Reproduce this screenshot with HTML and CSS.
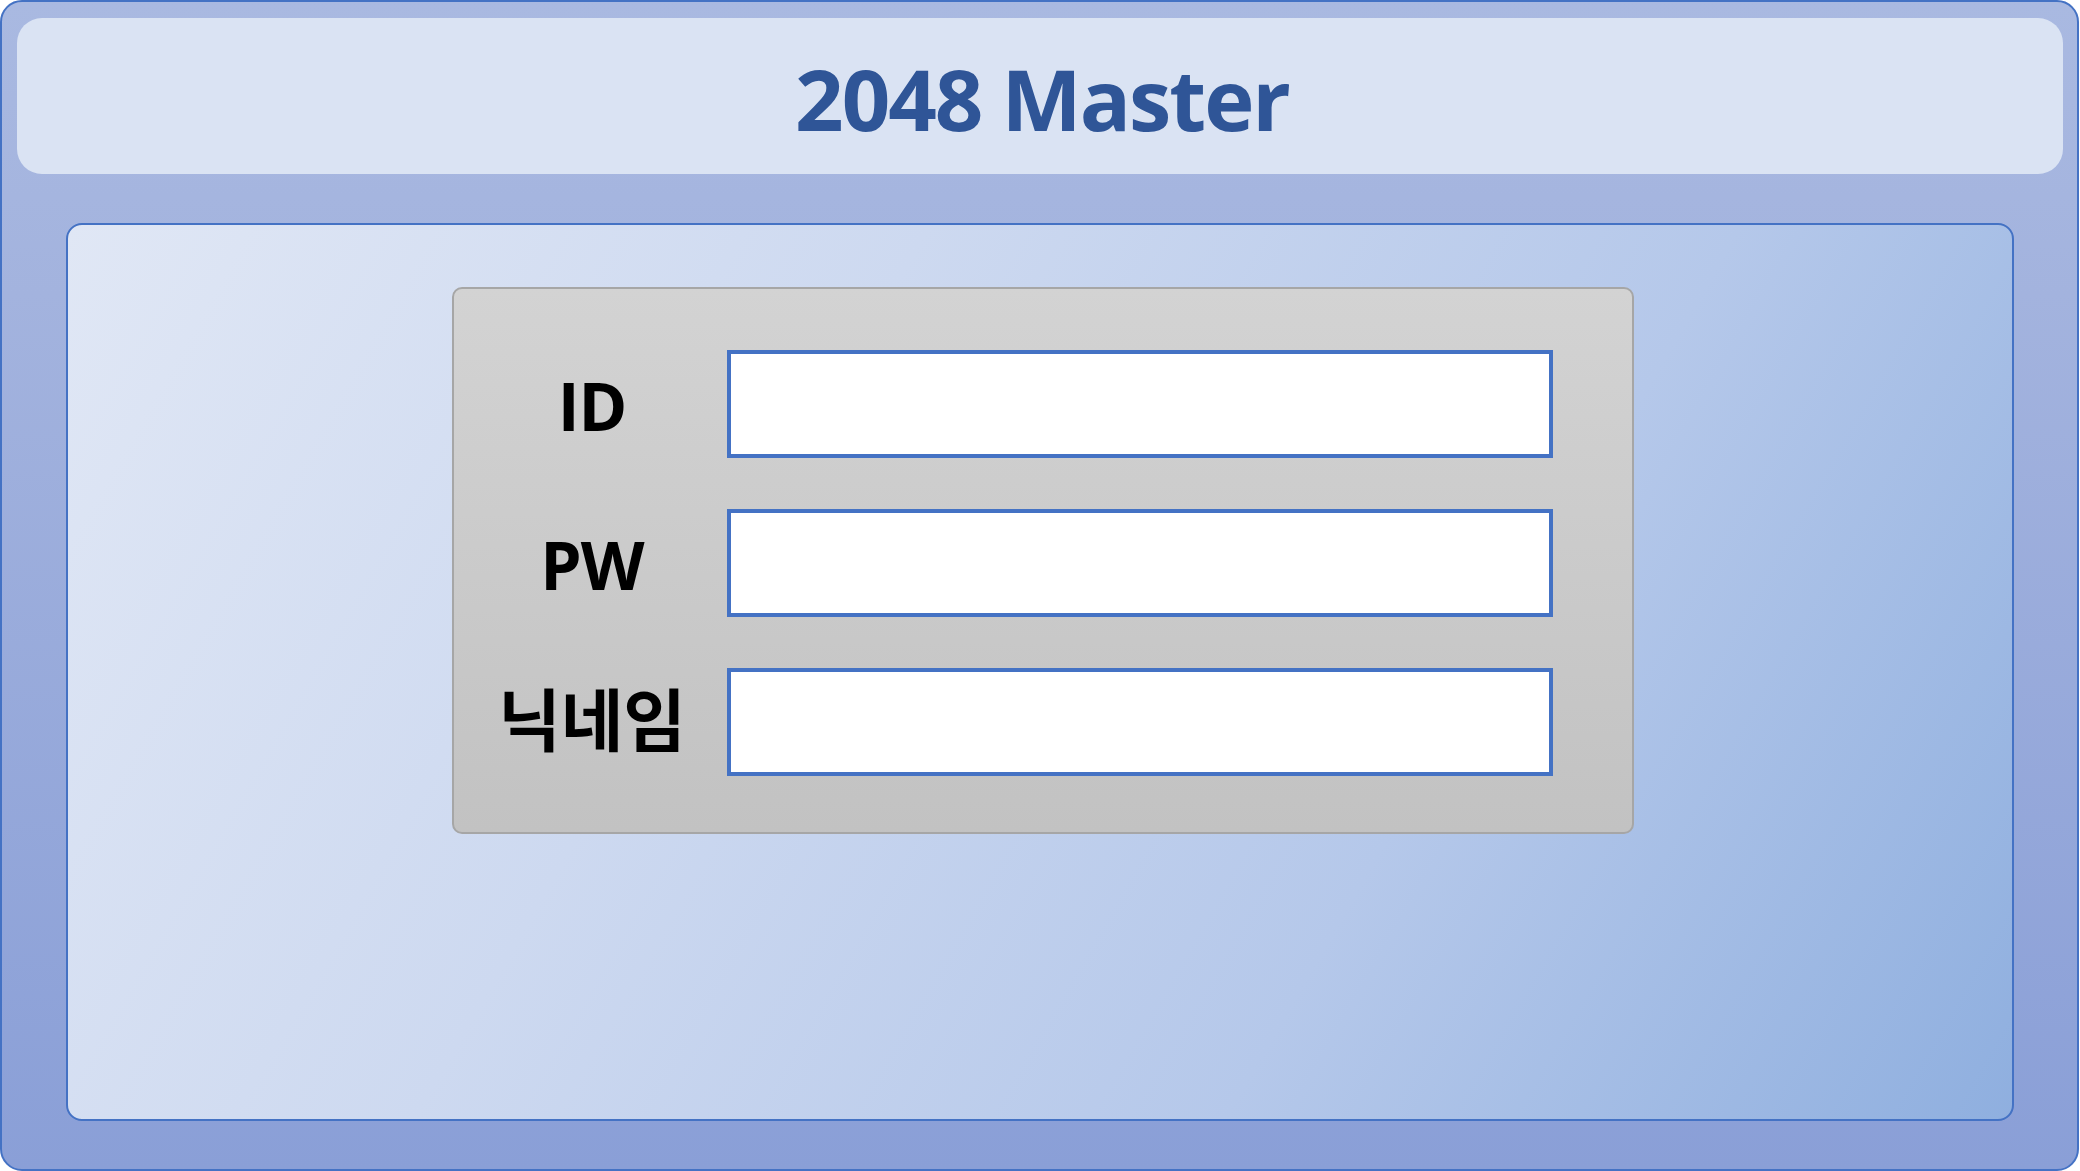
FILE: index.html
```html
<!DOCTYPE html>
<html lang="ko">
<head>
<meta charset="utf-8">
<title>2048 Master</title>
<link rel="stylesheet" href="styles.css">
</head>
<body>
<div class="frame">
  <header class="header">
    <h1 class="title">2048 Master</h1>
  </header>
  <main class="stage">
    <form class="login">
      <div class="row">
        <label class="label" for="uid">ID</label>
        <input class="field" id="uid" type="text">
      </div>
      <div class="row">
        <label class="label" for="upw">PW</label>
        <input class="field" id="upw" type="password">
      </div>
      <div class="row">
        <label class="label label-ko" for="unick">닉네임</label>
        <input class="field" id="unick" type="text">
      </div>
    </form>
  </main>
</div>
</body>
</html>
```
FILE: styles.css
```css
* { box-sizing: border-box; }
html, body { margin: 0; padding: 0; }
body {
  width: 2080px;
  height: 1171px;
  overflow: hidden;
  background: #ffffff;
  font-family: "Open Sans", "Noto Sans", "Noto Sans CJK KR", sans-serif;
}
.frame {
  width: 2079px;
  height: 1171px;
  border: 2px solid #4472c4;
  border-radius: 22px;
  background: linear-gradient(180deg, #a9b9e1 0%, #a3b3de 25%, #8a9fd7 100%);
  padding: 16px 14px 48px 15px;
  display: flex;
  flex-direction: column;
}
.header {
  height: 156px;
  flex: none;
  background: #dae3f3;
  border-radius: 25px;
  display: flex;
  align-items: center;
  justify-content: center;
}
.title {
  margin: 0;
  font-family: "Open Sans", "Noto Sans", sans-serif;
  font-weight: 700;
  font-size: 85px;
  letter-spacing: -2px;
  line-height: 1;
  color: #2f5597;
  transform: translate(2px, 2px);
}
.stage {
  flex: 1;
  margin: 49px 49px 0 49px;
  border: 2px solid #4472c4;
  border-radius: 16px;
  background: linear-gradient(120deg, #e0e7f5 0%, #cdd9f0 35%, #b5c8ea 68%, #8fafdf 100%);
  display: flex;
  justify-content: center;
  align-items: flex-start;
  padding-top: 62px;
}
.login {
  width: 1182px;
  height: 547px;
  margin-left: 5px;
  border: 2px solid #a6a6a6;
  border-radius: 10px;
  background: linear-gradient(180deg, #d3d3d3 0%, #c2c2c2 100%);
  padding: 61px 79px 0 0;
  display: flex;
  flex-direction: column;
  gap: 51px;
}
.row {
  display: flex;
  align-items: center;
  height: 108px;
}
.label {
  width: 273px;
  flex: none;
  text-align: center;
  font-family: "Open Sans", "Noto Sans CJK KR", sans-serif;
  font-weight: 700;
  font-size: 66px;
  letter-spacing: -1px;
  line-height: 1;
  color: #000000;
  padding-left: 4px;
  padding-top: 2px;
}
.label-ko {
  font-family: "Noto Sans CJK KR", sans-serif;
  font-weight: 700;
  font-size: 68px;
  letter-spacing: 0;
  padding-top: 0;
  margin-top: -10px;
}
.field {
  width: 826px;
  height: 108px;
  flex: none;
  margin: 0;
  border: 4px solid #4472c4;
  border-radius: 0;
  background: #ffffff;
  outline: none;
  padding: 0 12px;
  font-size: 40px;
}
```
